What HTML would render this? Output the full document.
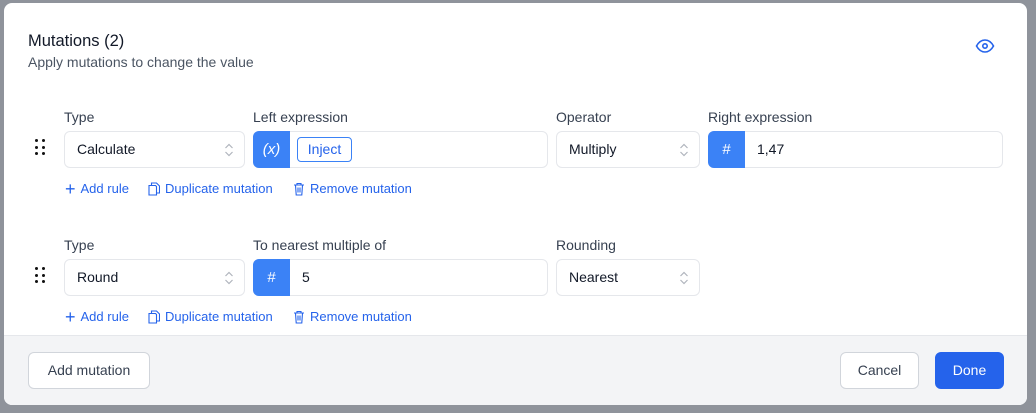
<!DOCTYPE html>
<html><head><style>
*{box-sizing:border-box;margin:0;padding:0}
body{width:1036px;height:413px;background:#8f939b;font-family:"Liberation Sans",sans-serif;position:relative;overflow:hidden}
.m{position:absolute;left:4px;top:3px;width:1023px;height:402px;background:#fff;border-radius:8px;overflow:hidden}
.a{position:absolute}
.lbl{font-size:14px;color:#374151}
.box{position:absolute;height:37px;border:1px solid #e5e7eb;border-radius:6px;background:#fff;font-size:14px;color:#111827;line-height:35px;padding-left:12px}
.chev{position:absolute;right:10px;top:9px}
.pre{position:absolute;left:-1px;top:-1px;bottom:-1px;width:37px;background:#3b82f6;border-radius:6px 0 0 6px;color:#fff;text-align:center;line-height:37px;font-size:15px}
.lk{position:absolute;font-size:13px;color:#2563eb;display:flex;align-items:center;gap:5px;line-height:16px}
.foot{position:absolute;left:0;top:332px;width:1023px;height:70px;background:#f3f4f6;border-top:1px solid #e5e7eb}
.btn{position:absolute;height:37px;border:1px solid #d1d5db;border-radius:6px;background:#fff;font-size:14px;color:#374151;text-align:center;line-height:35px}
.dots{position:absolute;width:11px;height:17px}
.dots i{position:absolute;width:3.4px;height:3.4px;border-radius:50%;background:#111}
</style></head><body>
<div class="m">
<div class="a" style="left:24px;top:29px;font-size:16.5px;color:#111827">Mutations (2)</div>
<div class="a" style="left:24px;top:51px;font-size:14px;color:#4b5563">Apply mutations to change the value</div>
<svg class="a" style="left:971px;top:35px" width="20" height="16" viewBox="0 0 20 16"><path d="M1.5 8C4 3.5 7 2 10 2s6 1.5 8.5 6c-2.5 4.5-5.5 6-8.5 6S4 12.5 1.5 8z" fill="none" stroke="#2563eb" stroke-width="1.6"/><circle cx="10" cy="8" r="2.2" fill="none" stroke="#2563eb" stroke-width="1.6"/></svg>

<div class="dots" style="left:31px;top:136px"><i style="left:0;top:0"></i><i style="left:7px;top:0"></i><i style="left:0;top:6.5px"></i><i style="left:7px;top:6.5px"></i><i style="left:0;top:13px"></i><i style="left:7px;top:13px"></i></div>
<div class="a lbl" style="left:60px;top:106px">Type</div>
<div class="a lbl" style="left:249px;top:106px">Left expression</div>
<div class="a lbl" style="left:552px;top:106px">Operator</div>
<div class="a lbl" style="left:704px;top:106px">Right expression</div>
<div class="box" style="left:60px;top:128px;width:181px">Calculate<svg class="chev" width="10" height="18" viewBox="0 0 10 18"><path d="M1.5 7l3.5-3.5 3.5 3.5M1.5 11l3.5 3.5 3.5-3.5" fill="none" stroke="#b0b5bd" stroke-width="1.2"/></svg></div>
<div class="box" style="left:249px;top:128px;width:295px"><div class="pre" style="font-style:italic">(x)</div><div class="a" style="left:43px;top:5px;height:25px;width:55px;border:1px solid #3b82f6;border-radius:4px;color:#2563eb;line-height:23px;text-align:center">Inject</div></div>
<div class="box" style="left:552px;top:128px;width:144px">Multiply<svg class="chev" width="10" height="18" viewBox="0 0 10 18"><path d="M1.5 7l3.5-3.5 3.5 3.5M1.5 11l3.5 3.5 3.5-3.5" fill="none" stroke="#b0b5bd" stroke-width="1.2"/></svg></div>
<div class="box" style="left:704px;top:128px;width:295px;padding-left:48px"><div class="pre">#</div>1,47</div>
<div class="lk" style="left:61px;top:178px"><span style="font-size:18px;line-height:16px">+</span>Add rule</div>
<div class="lk" style="left:144px;top:178px"><svg width="12" height="14" viewBox="0 0 12 14"><path d="M3.5 3V1h5l3 3v7H8.5M1 3.5h6.5l1 1V13H1z" fill="none" stroke="#2563eb" stroke-width="1.1"/></svg>Duplicate mutation</div>
<div class="lk" style="left:289px;top:178px"><svg width="12" height="14" viewBox="0 0 12 14"><path d="M1 3h10M4 3V1.5h4V3M2.5 3l.7 10h5.6l.7-10M5 5.5v5M7 5.5v5" fill="none" stroke="#2563eb" stroke-width="1.1"/></svg>Remove mutation</div>

<div class="dots" style="left:31px;top:264px"><i style="left:0;top:0"></i><i style="left:7px;top:0"></i><i style="left:0;top:6.5px"></i><i style="left:7px;top:6.5px"></i><i style="left:0;top:13px"></i><i style="left:7px;top:13px"></i></div>
<div class="a lbl" style="left:60px;top:234px">Type</div>
<div class="a lbl" style="left:249px;top:234px">To nearest multiple of</div>
<div class="a lbl" style="left:552px;top:234px">Rounding</div>
<div class="box" style="left:60px;top:256px;width:181px">Round<svg class="chev" width="10" height="18" viewBox="0 0 10 18"><path d="M1.5 7l3.5-3.5 3.5 3.5M1.5 11l3.5 3.5 3.5-3.5" fill="none" stroke="#b0b5bd" stroke-width="1.2"/></svg></div>
<div class="box" style="left:249px;top:256px;width:295px;padding-left:48px"><div class="pre">#</div>5</div>
<div class="box" style="left:552px;top:256px;width:144px">Nearest<svg class="chev" width="10" height="18" viewBox="0 0 10 18"><path d="M1.5 7l3.5-3.5 3.5 3.5M1.5 11l3.5 3.5 3.5-3.5" fill="none" stroke="#b0b5bd" stroke-width="1.2"/></svg></div>
<div class="lk" style="left:61px;top:306px"><span style="font-size:18px;line-height:16px">+</span>Add rule</div>
<div class="lk" style="left:144px;top:306px"><svg width="12" height="14" viewBox="0 0 12 14"><path d="M3.5 3V1h5l3 3v7H8.5M1 3.5h6.5l1 1V13H1z" fill="none" stroke="#2563eb" stroke-width="1.1"/></svg>Duplicate mutation</div>
<div class="lk" style="left:289px;top:306px"><svg width="12" height="14" viewBox="0 0 12 14"><path d="M1 3h10M4 3V1.5h4V3M2.5 3l.7 10h5.6l.7-10M5 5.5v5M7 5.5v5" fill="none" stroke="#2563eb" stroke-width="1.1"/></svg>Remove mutation</div>

<div class="foot">
<div class="btn" style="left:24px;top:16px;width:122px">Add mutation</div>
<div class="btn" style="left:836px;top:16px;width:79px">Cancel</div>
<div class="btn" style="left:931px;top:16px;width:69px;background:#2563eb;border-color:#2563eb;color:#fff">Done</div>
</div>
</div>
</body></html>
